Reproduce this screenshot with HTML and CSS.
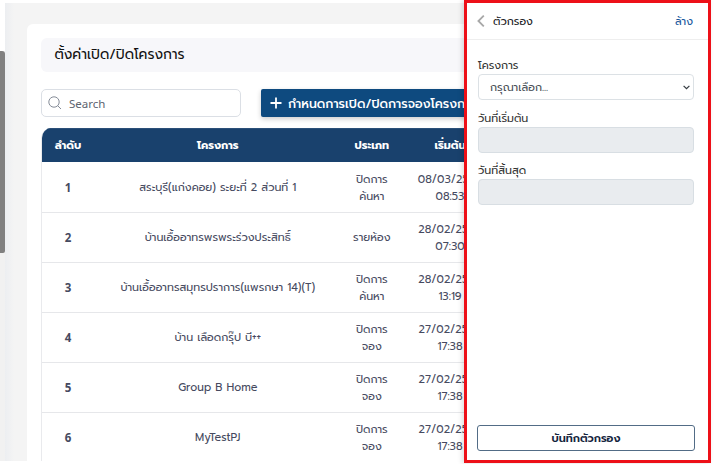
FILE: index.html
```html
<!DOCTYPE html>
<html lang="th">
<head>
<meta charset="utf-8">
<title>ตั้งค่าเปิด/ปิดโครงการ</title>
<link rel="stylesheet" href="styles.css">
</head>
<body>
<div class="page">
  <div class="scroll"><div class="thumb"></div></div>
  <main class="main">
    <section class="card">
      <h1 class="title">ตั้งค่าเปิด/ปิดโครงการ</h1>
      <div class="tools">
        <div class="search">
          <svg width="14" height="14" viewBox="0 0 14 14" fill="none" stroke="#858c98" stroke-width="1"><circle cx="6" cy="6" r="5.2"/><path d="M9.7 9.7L13 13"/></svg>
          <span>Search</span>
        </div>
        <div class="add">
          <svg width="12" height="12" viewBox="0 0 12 12" stroke="#fff" stroke-width="1.8"><path d="M6 .5v11M.5 6h11"/></svg>
          <span>กำหนดการเปิด/ปิดการจองโครงการ</span>
        </div>
      </div>
      <div class="table">
        <div class="row head"><div>ลำดับ</div><div>โครงการ</div><div>ประเภท</div><div>เริ่มต้น</div></div>
        <div class="row"><b>1</b><div>สระบุรี(แก่งคอย) ระยะที่ 2 ส่วนที่ 1</div><div><span>ปิดการ</span><span>ค้นหา</span></div><div class="date"><span>08/03/2566</span><span>08:53</span></div></div>
        <div class="row"><b>2</b><div>บ้านเอื้ออาทรพรพระร่วงประสิทธิ์</div><div>รายห้อง</div><div class="date"><span>28/02/2566</span><span>07:30</span></div></div>
        <div class="row"><b>3</b><div>บ้านเอื้ออาทรสมุทรปราการ(แพรกษา 14)(T)</div><div><span>ปิดการ</span><span>ค้นหา</span></div><div class="date"><span>28/02/2566</span><span>13:19</span></div></div>
        <div class="row"><b>4</b><div>บ้าน เลือดกรุ๊ป บี++</div><div><span>ปิดการ</span><span>จอง</span></div><div class="date"><span>27/02/2566</span><span>17:38</span></div></div>
        <div class="row"><b>5</b><div>Group B Home</div><div><span>ปิดการ</span><span>จอง</span></div><div class="date"><span>27/02/2566</span><span>17:38</span></div></div>
        <div class="row"><b>6</b><div>MyTestPJ</div><div><span>ปิดการ</span><span>จอง</span></div><div class="date"><span>27/02/2566</span><span>17:38</span></div></div>
      </div>
    </section>
  </main>
</div>
<aside class="drawer">
  <header class="bar">
    <svg width="8" height="12" viewBox="0 0 8 12" fill="none" stroke="#a8a8a8" stroke-width="1.8"><path d="M6.8.6L1.4 6l5.4 5.4"/></svg>
    <span class="bar-title">ตัวกรอง</span>
    <span class="clear">ล้าง</span>
  </header>
  <div class="form">
    <label class="label">โครงการ</label>
    <div class="field select"><span>กรุณาเลือก...</span>
      <svg width="7" height="5" viewBox="0 0 7 5" fill="none" stroke="#343a40" stroke-width="1.2"><path d="M.6.8l2.9 2.9L6.4.8"/></svg>
    </div>
    <label class="label">วันที่เริ่มต้น</label>
    <div class="field disabled"></div>
    <label class="label">วันที่สิ้นสุด</label>
    <div class="field disabled"></div>
  </div>
  <div class="save">บันทึกตัวกรอง</div>
</aside>
</body>
</html>
```
FILE: styles.css
```css
* { box-sizing: border-box; }
body {
  margin: 0;
  width: 714px;
  height: 464px;
  overflow: hidden;
  background: #fff;
  color: #464a60;
  font: 11px/17px Prompt, "Noto Sans Thai", "Noto Sans", sans-serif;
}
span { white-space: nowrap; }
svg { flex: none; display: block; }
.page { display: flex; width: 468px; height: 461px; padding-top: 3px; overflow: hidden; }
.scroll { width: 5px; padding-top: 48px; background: linear-gradient(#fff 48px, #f1f1f1 48px); }
.thumb { width: 5px; height: 202px; background: #808080; border-radius: 0 3px 2px 0; }
.main { flex: none; width: 600px; padding: 21px 0 0 22px; background: linear-gradient(90deg, #eceef1, #f4f4f4 9px); overflow: hidden; }
.card { height: 460px; padding: 14px; background: #fff; border-radius: 6px; }
.title {
  display: flex; align-items: center;
  height: 34px; margin: 0; padding-left: 13.5px;
  background: #f7f7fa; border-radius: 6px;
  color: #111; font-size: 13.8px; line-height: 16.6px; font-weight: 400;
}
.tools { display: flex; gap: 20px; margin-top: 17px; }
.search {
  display: flex; align-items: center; gap: 7px;
  width: 200px; height: 28px; padding-left: 6px;
  border: 1px solid #dbdfe5; border-radius: 5px;
  color: #5d6470; font-size: 11.5px; font-family: "Noto Sans", sans-serif;
}
.add {
  display: flex; align-items: center; gap: 6px;
  width: 250px; height: 28px; padding-left: 9px;
  background: #0e4a7f; border-radius: 2px;
  box-shadow: 0 2px 5px #0003;
  color: #fff; font-size: 12.4px; font-weight: 500;
}
.table { margin-top: 11px; width: 560px; border-left: 1px solid #e9eaed; border-radius: 10px 0 0 0; overflow: hidden; }
.row {
  display: grid; grid-template-columns: 52px 247.6px 60.4px 96px;
  align-items: center; justify-items: center;
  height: 50px; border-top: 1px solid #e6e7ea; white-space: nowrap;
}
.row > div { display: flex; flex-direction: column; align-items: center; }
.row b { font-size: 11.5px; font-weight: 700; font-family: "Noto Sans", sans-serif; }
.row.head { height: 34px; margin-left: -1px; padding-left: 1px; background: #19416d; border-top: 1px solid #2b5079; color: #fff; font-weight: 700; }
.row.head + .row { border-top-color: #fff; }
.drawer {
  position: absolute; left: 464px; top: 0;
  display: flex; flex-direction: column;
  width: 247px; height: 463px;
  border: 3px solid #ed1018; background: #fff;
  box-shadow: -2px 0 5px #0002;
}
.bar { display: flex; align-items: center; height: 37px; padding: 0 15px 0 10px; border-bottom: 1px solid #eee; }
.bar-title { margin-left: 8px; color: #202124; }
.clear { margin-left: auto; color: #17579c; }
.form { flex: 1; padding: 17px 14px 0 11px; color: #333; }
.label { display: flex; align-items: center; height: 17px; }
.field { height: 26px; margin-bottom: 9.7px; border: 1px solid #dce1e5; border-radius: 4px; }
.select { display: flex; align-items: center; justify-content: space-between; padding: 0 3px 0 11px; color: #495057; }
.disabled { background: #e9ecef; border-color: #d8dee3; }
.save {
  display: flex; align-items: center; justify-content: center;
  height: 26px; margin: 0 13px 9px 10px;
  border: 1px solid #526c86; border-radius: 3px;
  color: #14243d; font-weight: 600;
}
```
